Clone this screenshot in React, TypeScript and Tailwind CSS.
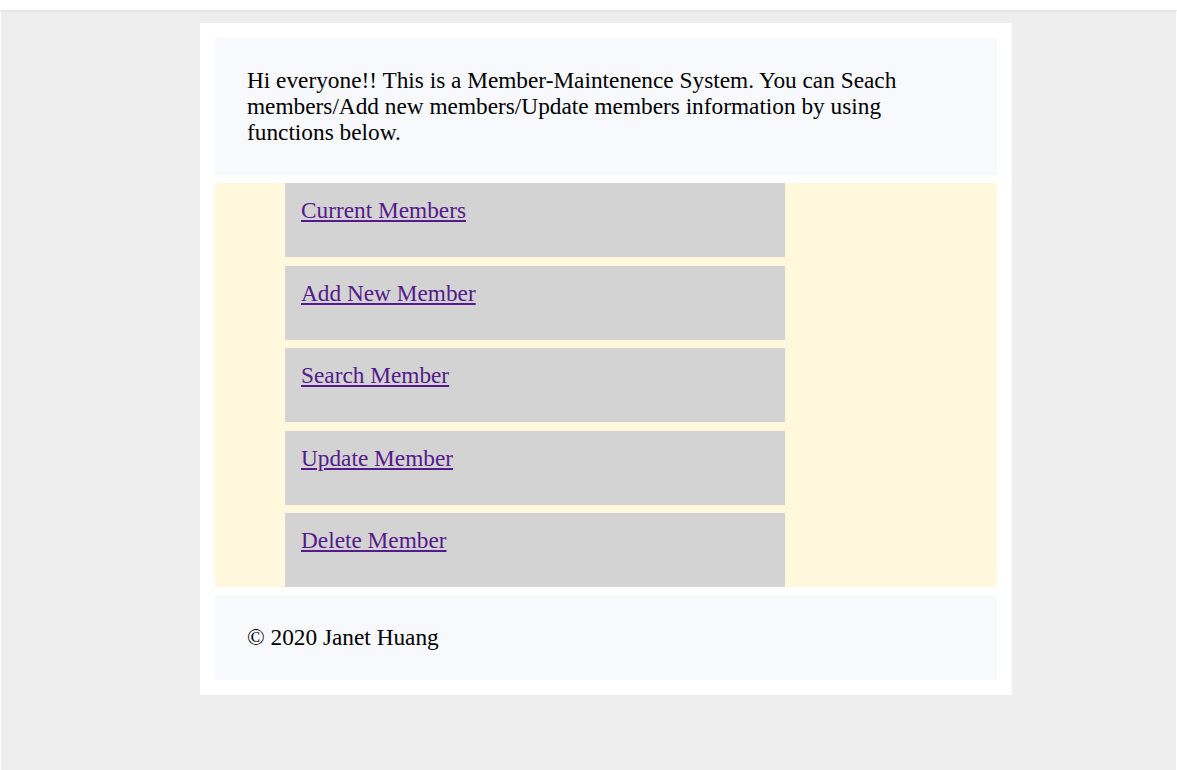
export default function App() {
  const links = ["Current Members", "Add New Member", "Search Member", "Update Member", "Delete Member"];

  return (
    <div className="w-[1177px] h-[770px] bg-white overflow-hidden font-['Liberation_Serif','Times_New_Roman',serif]">
      <div className="mt-[10px] h-[760px] border-t-2 border-[#e4e4e4] border-x border-x-white bg-[#eeeeee] pt-[11px]">
        <div className="ml-[199px] w-[812px] bg-white p-[15px]">
          <header className="bg-[#f8f9fd] px-8 pt-[29px] pb-[30px] text-[23.3px] leading-[26px] text-black">
            <p className="max-w-[690px]">
              Hi everyone!! This is a Member-Maintenence System. You can Seach members/Add new members/Update members
              information by using functions below.
            </p>
          </header>

          <nav className="mt-2 bg-[#fff8dc] pl-[70px] flex flex-col gap-[8.5px]">
            {links.map((label) => (
              <div key={label} className="w-[500px] h-[74px] bg-[#d3d3d3] pl-4 pt-[14px]">
                <a href="#" className="text-[23.3px] leading-[26px] text-[#551a8b] underline">
                  {label}
                </a>
              </div>
            ))}
          </nav>

          <footer className="mt-2 bg-[#f8f9fd] px-8 pt-[29px] pb-[30px] text-[23.3px] leading-[26px] text-black">
            © 2020 Janet Huang
          </footer>
        </div>
      </div>
    </div>
  );
}
